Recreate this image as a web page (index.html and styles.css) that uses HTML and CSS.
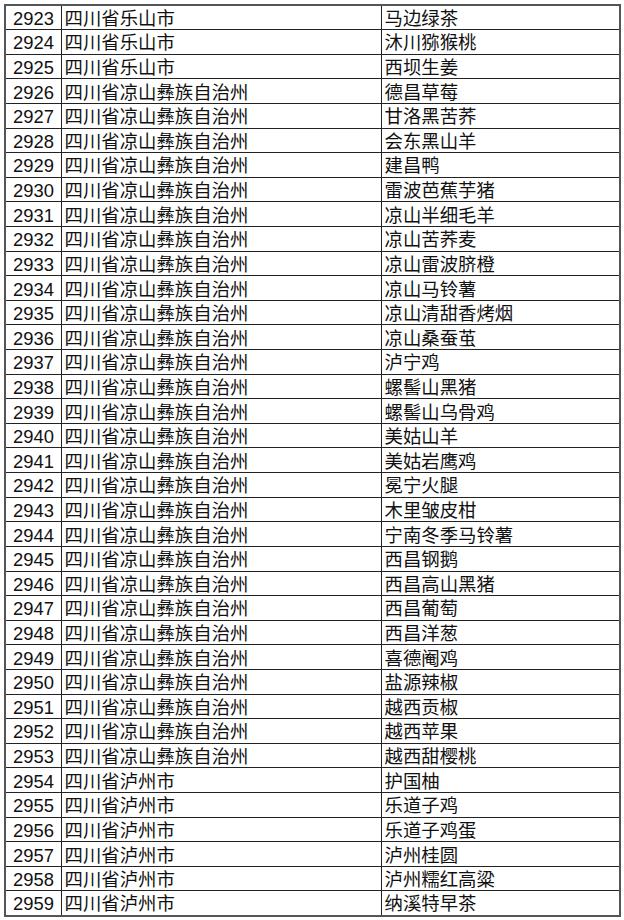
FILE: index.html
```html
<!DOCTYPE html>
<html lang="zh">
<head>
<meta charset="utf-8">
<link rel="stylesheet" href="styles.css">
</head>
<body>
<table class="list">
<colgroup><col class="c-no"><col class="c-area"><col class="c-name"></colgroup>
<tbody>
<tr><td class="no">2923</td><td>四川省乐山市</td><td>马边绿茶</td></tr>
<tr><td class="no">2924</td><td>四川省乐山市</td><td>沐川猕猴桃</td></tr>
<tr><td class="no">2925</td><td>四川省乐山市</td><td>西坝生姜</td></tr>
<tr><td class="no">2926</td><td>四川省凉山彝族自治州</td><td>德昌草莓</td></tr>
<tr><td class="no">2927</td><td>四川省凉山彝族自治州</td><td>甘洛黑苦荞</td></tr>
<tr><td class="no">2928</td><td>四川省凉山彝族自治州</td><td>会东黑山羊</td></tr>
<tr><td class="no">2929</td><td>四川省凉山彝族自治州</td><td>建昌鸭</td></tr>
<tr><td class="no">2930</td><td>四川省凉山彝族自治州</td><td>雷波芭蕉芋猪</td></tr>
<tr><td class="no">2931</td><td>四川省凉山彝族自治州</td><td>凉山半细毛羊</td></tr>
<tr><td class="no">2932</td><td>四川省凉山彝族自治州</td><td>凉山苦荞麦</td></tr>
<tr><td class="no">2933</td><td>四川省凉山彝族自治州</td><td>凉山雷波脐橙</td></tr>
<tr><td class="no">2934</td><td>四川省凉山彝族自治州</td><td>凉山马铃薯</td></tr>
<tr><td class="no">2935</td><td>四川省凉山彝族自治州</td><td>凉山清甜香烤烟</td></tr>
<tr><td class="no">2936</td><td>四川省凉山彝族自治州</td><td>凉山桑蚕茧</td></tr>
<tr><td class="no">2937</td><td>四川省凉山彝族自治州</td><td>泸宁鸡</td></tr>
<tr><td class="no">2938</td><td>四川省凉山彝族自治州</td><td>螺髻山黑猪</td></tr>
<tr><td class="no">2939</td><td>四川省凉山彝族自治州</td><td>螺髻山乌骨鸡</td></tr>
<tr><td class="no">2940</td><td>四川省凉山彝族自治州</td><td>美姑山羊</td></tr>
<tr><td class="no">2941</td><td>四川省凉山彝族自治州</td><td>美姑岩鹰鸡</td></tr>
<tr><td class="no">2942</td><td>四川省凉山彝族自治州</td><td>冕宁火腿</td></tr>
<tr><td class="no">2943</td><td>四川省凉山彝族自治州</td><td>木里皱皮柑</td></tr>
<tr><td class="no">2944</td><td>四川省凉山彝族自治州</td><td>宁南冬季马铃薯</td></tr>
<tr><td class="no">2945</td><td>四川省凉山彝族自治州</td><td>西昌钢鹅</td></tr>
<tr><td class="no">2946</td><td>四川省凉山彝族自治州</td><td>西昌高山黑猪</td></tr>
<tr><td class="no">2947</td><td>四川省凉山彝族自治州</td><td>西昌葡萄</td></tr>
<tr><td class="no">2948</td><td>四川省凉山彝族自治州</td><td>西昌洋葱</td></tr>
<tr><td class="no">2949</td><td>四川省凉山彝族自治州</td><td>喜德阉鸡</td></tr>
<tr><td class="no">2950</td><td>四川省凉山彝族自治州</td><td>盐源辣椒</td></tr>
<tr><td class="no">2951</td><td>四川省凉山彝族自治州</td><td>越西贡椒</td></tr>
<tr><td class="no">2952</td><td>四川省凉山彝族自治州</td><td>越西苹果</td></tr>
<tr><td class="no">2953</td><td>四川省凉山彝族自治州</td><td>越西甜樱桃</td></tr>
<tr><td class="no">2954</td><td>四川省泸州市</td><td>护国柚</td></tr>
<tr><td class="no">2955</td><td>四川省泸州市</td><td>乐道子鸡</td></tr>
<tr><td class="no">2956</td><td>四川省泸州市</td><td>乐道子鸡蛋</td></tr>
<tr><td class="no">2957</td><td>四川省泸州市</td><td>泸州桂圆</td></tr>
<tr><td class="no">2958</td><td>四川省泸州市</td><td>泸州糯红高粱</td></tr>
<tr><td class="no">2959</td><td>四川省泸州市</td><td>纳溪特早茶</td></tr>
</tbody>
</table>
</body>
</html>
```
FILE: styles.css
```css
html, body {
  margin: 0;
  padding: 0;
  background: #fff;
}
body {
  padding: 4px 0 0 4px;
}
.list {
  border-collapse: collapse;
  table-layout: fixed;
  width: 615px;
  border: 2px solid #555;
  font-family: "Liberation Sans", "Noto Sans CJK SC", sans-serif;
  font-size: 18.4px;
  color: #111;
}
.c-no { width: 56px; }
.c-area { width: 320px; }
.c-name { width: 239px; }
.list tr {
  height: 24.62px;
}
.list td {
  border: 1px solid #222;
  padding: 2px 0 0 3px;
  line-height: 21px;
  white-space: nowrap;
  overflow: hidden;
  vertical-align: middle;
}
.list td.no {
  padding-left: 7px;
}
```
